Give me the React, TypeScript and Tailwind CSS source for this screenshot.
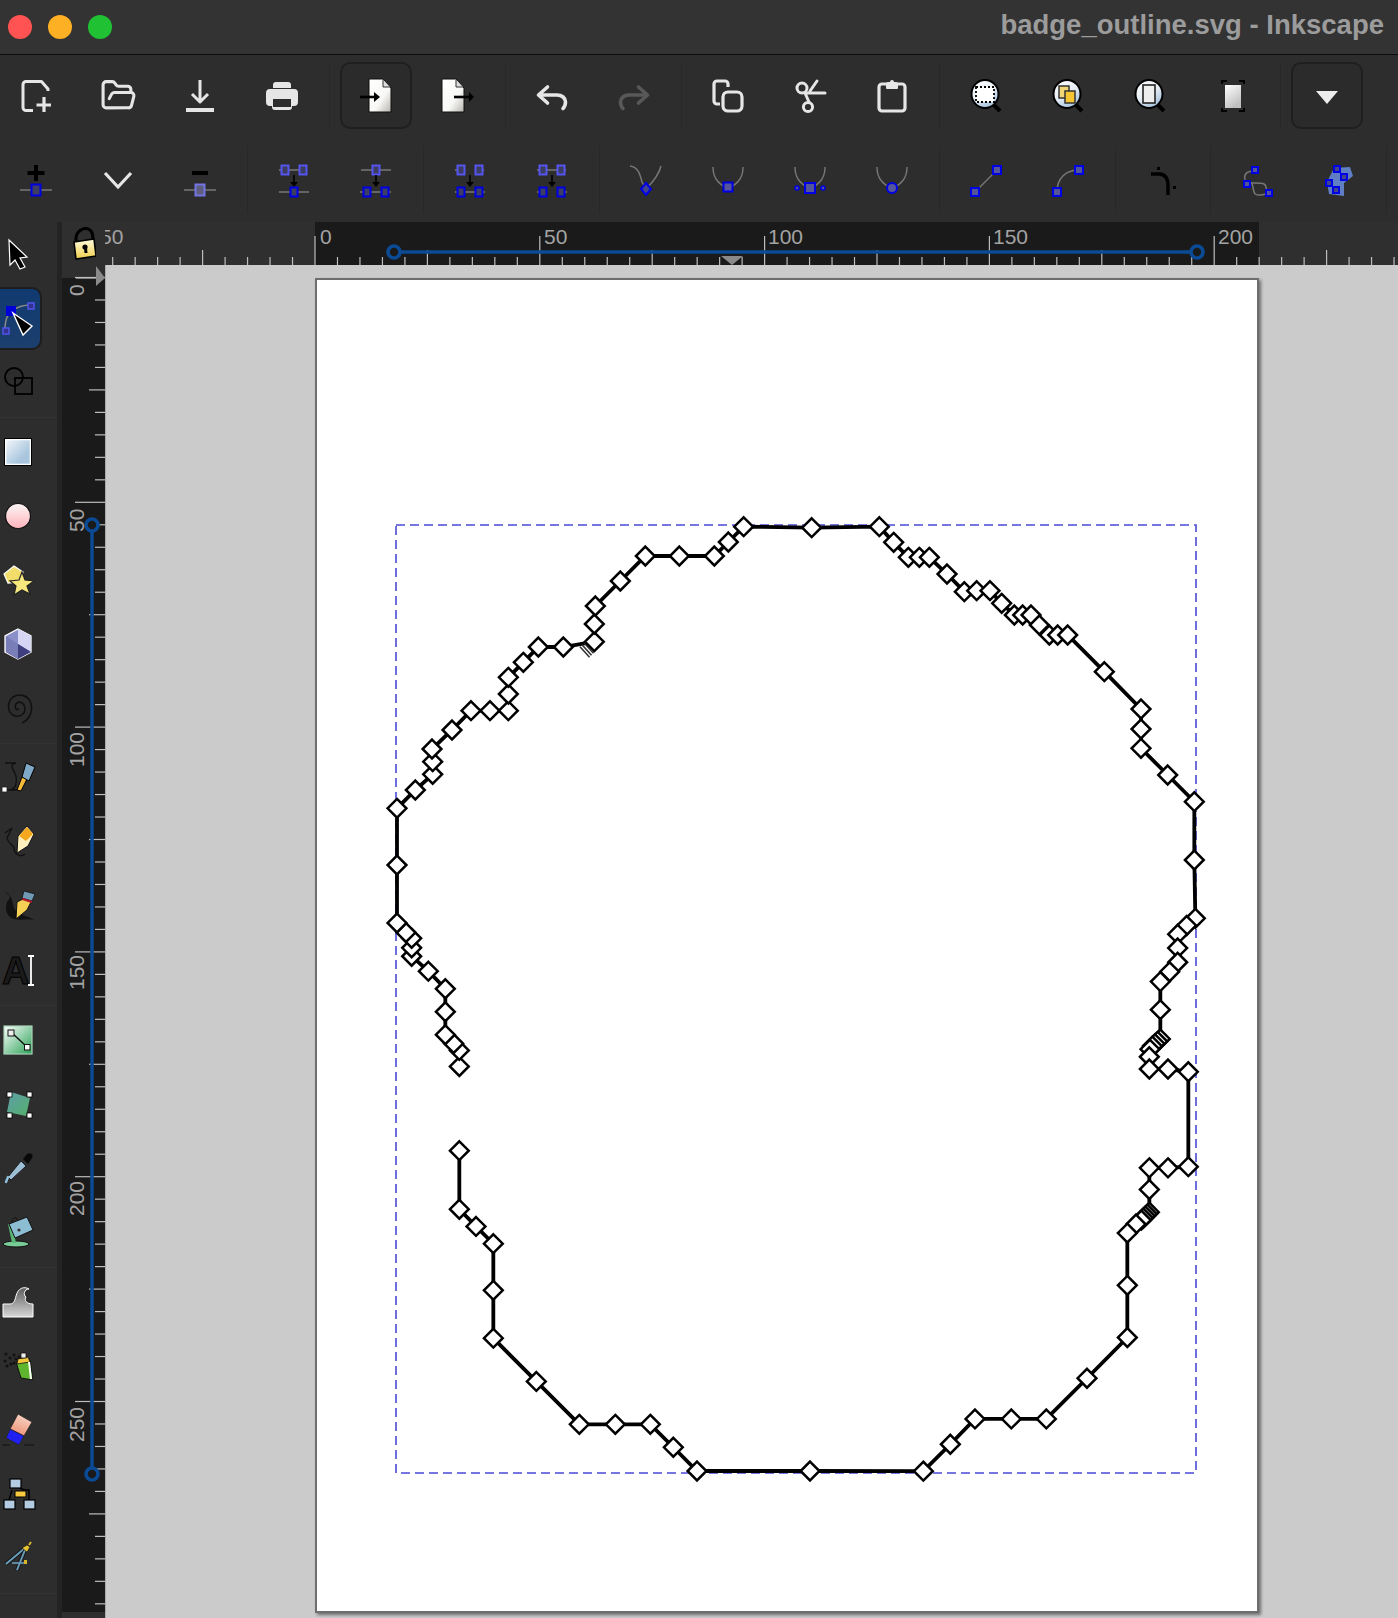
import React from "react";
import { FolderOpen } from "lucide-react";

const Svg = ({ children }: { children: React.ReactNode }) => (
  <svg width={32} height={32} viewBox="0 0 32 32" className="block overflow-visible shrink-0">
    {children}
  </svg>
);

const W = "#e6e6e6";
const B = "#0000e6";
const L = "#5555f0";
const G = "#777777";

const Sq = ({ x, y, w = 7, h = 9, c = B, f = "#3d3d62" }: { x: number; y: number; w?: number; h?: number; c?: string; f?: string }) => (
  <rect x={x - w / 2} y={y - h / 2} width={w} height={h} fill={f} stroke={c} strokeWidth={2} />
);

/* ---------- first toolbar ---------- */
const NewIcon = () => (
  <Svg>
    <path d="M28 11 V9 L21.5 1.5 H6 a3 3 0 0 0 -3 3 V27.5 a3 3 0 0 0 3 3 H13" fill="none" stroke={W} strokeWidth={3} strokeLinejoin="round" />
    <path d="M24 17 V32 M16.5 25 H31" fill="none" stroke={W} strokeWidth={3.2} />
  </Svg>
);
const SaveIcon = () => (
  <Svg>
    <path d="M16 0 V21 M8 14 L16 22 L24 14" fill="none" stroke={W} strokeWidth={3} strokeLinejoin="round" />
    <rect x="2" y="28" width="28" height="4" fill={W} />
  </Svg>
);
const PrintIcon = () => (
  <Svg>
    <path d="M7 5 a3 3 0 0 1 3 -3 H22 a3 3 0 0 1 3 3 V8 H7 Z" fill={W} />
    <path d="M4 9 H28 a4 4 0 0 1 4 4 V22 a4 4 0 0 1 -4 4 H26 V27 a3 3 0 0 1 -3 3 H9 a3 3 0 0 1 -3 -3 V26 H4 a4 4 0 0 1 -4 -4 V13 a4 4 0 0 1 4 -4 Z" fill={W} />
    <rect x="7" y="19" width="18" height="8" fill="#2d2d2d" />
  </Svg>
);
const DocGrad = ({ id }: { id: string }) => (
  <defs>
    <linearGradient id={id} x1="0" y1="0" x2="1" y2="1">
      <stop offset="0" stopColor="#ffffff" />
      <stop offset="0.6" stopColor="#f8f8f6" />
      <stop offset="1" stopColor="#b5b3ad" />
    </linearGradient>
  </defs>
);
const ImportIcon = () => (
  <Svg>
    <DocGrad id="imp" />
    <path d="M9 -1 H23 L31 8 V32 H9 Z" fill="url(#imp)" stroke="#111" strokeWidth={1} />
    <path d="M23 0 V7 H30" fill="#ddd" stroke="#333" strokeWidth={1} />
    <path d="M0 17 H16" stroke="#000" strokeWidth={2.6} />
    <path d="M14 12 L20 17 L14 22 Z" fill="#000" />
  </Svg>
);
const ExportIcon = () => (
  <Svg>
    <DocGrad id="exp" />
    <path d="M0 -1 H14 L22 8 V32 H0 Z" fill="url(#exp)" stroke="#111" strokeWidth={1} />
    <path d="M14 0 V7 H21" fill="#ddd" stroke="#333" strokeWidth={1} />
    <path d="M12 17 H28" stroke="#000" strokeWidth={2.6} />
    <path d="M27 12 L32 17 L27 22 Z" fill="#000" />
  </Svg>
);
const UndoIcon = ({ c = W, flip = false }: { c?: string; flip?: boolean }) => (
  <Svg>
    <g transform={flip ? "matrix(-1 0 0 1 32 0)" : undefined}>
      <path d="M11.5 7 L2.5 15 L11.5 23 M3 15 H21 C26 15 29.5 18 29.5 22 C29.5 25 28.5 27 27 28.5" fill="none" stroke={c} strokeWidth={3.6} strokeLinecap="round" strokeLinejoin="round" />
    </g>
  </Svg>
);
const CopyIcon = () => (
  <Svg>
    <path d="M8 24 H5 a3 3 0 0 1 -3 -3 V4 a3 3 0 0 1 3 -3 H13 a3 3 0 0 1 3 3 V7" fill="none" stroke={W} strokeWidth={3.2} />
    <rect x="11" y="12" width="19" height="19" rx="5" fill="none" stroke={W} strokeWidth={3.2} />
  </Svg>
);
const CutIcon = () => (
  <Svg>
    <circle cx="8" cy="8" r="5" fill="none" stroke={W} strokeWidth={3} />
    <circle cx="14" cy="27" r="4.6" fill="none" stroke={W} strokeWidth={3} />
    <path d="M11 13 L15 22 M13 13 H31 M16 11 L23 1" fill="none" stroke={W} strokeWidth={3} strokeLinecap="round" />
  </Svg>
);
const PasteIcon = () => (
  <Svg>
    <rect x="3" y="4" width="26" height="27" rx="3" fill="none" stroke={W} strokeWidth={3.2} />
    <path d="M10 4 a2 2 0 0 1 2 -2 h2 a2 2 0 0 1 4 0 h2 a2 2 0 0 1 2 2 V8 a1 1 0 0 1 -1 1 H11 a1 1 0 0 1 -1 -1 Z" fill={W} />
  </Svg>
);
const ZoomShell = ({ id, children }: { id: string; children: React.ReactNode }) => (
  <Svg>
    <defs>
      <linearGradient id={id} x1="0" y1="0" x2="0.6" y2="1">
        <stop offset="0" stopColor="#ffffff" />
        <stop offset="0.55" stopColor="#e8eef5" />
        <stop offset="1" stopColor="#a9c3dd" />
      </linearGradient>
    </defs>
    <path d="M24 25 L30 31" stroke="#000" strokeWidth={4} />
    <ellipse cx="15" cy="14" rx="13.5" ry="14" fill={`url(#${id})`} stroke="#000" strokeWidth={2} />
    {children}
  </Svg>
);
const ZoomSel = () => (
  <ZoomShell id="z1">
    <rect x="6" y="7" width="18" height="15" fill="#fff" stroke="#000" strokeWidth={1.8} strokeDasharray="2 2" />
  </ZoomShell>
);
const ZoomDraw = () => (
  <ZoomShell id="z2">
    <rect x="7" y="6" width="10" height="12" fill="#f2d675" stroke="#333" strokeWidth={1.5} />
    <rect x="13" y="11" width="10" height="12" fill="#f7c531" stroke="#333" strokeWidth={1.5} />
  </ZoomShell>
);
const ZoomPage = () => (
  <ZoomShell id="z3">
    <rect x="9" y="5" width="12" height="18" fill="#eee" stroke="#222" strokeWidth={1.6} />
  </ZoomShell>
);
const FitPage = () => (
  <Svg>
    <defs>
      <linearGradient id="fp" x1="0" y1="0" x2="0.5" y2="1">
        <stop offset="0" stopColor="#fff" />
        <stop offset="1" stopColor="#c0c0c0" />
      </linearGradient>
    </defs>
    <rect x="8" y="5" width="16" height="23" fill="url(#fp)" />
    <path d="M5 4 V1 H10 M22 1 H27 V4 M5 28 V31 H10 M22 31 H27 V28" fill="none" stroke="#000" strokeWidth={2} />
  </Svg>
);
const MenuArrow = () => (
  <Svg>
    <path d="M5 11 H27 L16 24 Z" fill="#eeeeee" />
  </Svg>
);

/* ---------- second toolbar ---------- */
const AddNode = () => (
  <Svg>
    <path d="M16 1 V17 M7.5 9 H24.5" stroke="#000" strokeWidth={4} />
    <path d="M0 26 H32" stroke={G} strokeWidth={1.5} />
    <Sq x={16} y={26} w={9} h={11} />
  </Svg>
);
const Chevron = () => (
  <Svg>
    <path d="M3 9 L16 23 L29 9" fill="none" stroke={W} strokeWidth={3.2} />
  </Svg>
);
const RemoveNode = () => (
  <Svg>
    <path d="M8 9 H24" stroke="#000" strokeWidth={4} />
    <path d="M0 26 H32" stroke={G} strokeWidth={1.5} />
    <Sq x={16} y={26} w={9} h={11} c="#7474e6" f="#5e5e7e" />
  </Svg>
);
const Arrow = () => (
  <>
    <path d="M16 11 V20" stroke="#000" strokeWidth={1.6} />
    <path d="M12 18 H20 L16 23 Z" fill="#000" />
  </>
);
const Join1 = () => (
  <Svg>
    <path d="M1 6 H29 M1 28 H31" stroke={G} strokeWidth={1.4} />
    <Sq x={7} y={6} c={L} /><Sq x={25} y={6} c={L} />
    <Arrow />
    <Sq x={16} y={28} />
  </Svg>
);
const Join2 = () => (
  <Svg>
    <path d="M1 6 H31 M0 28 H31" stroke={G} strokeWidth={1.4} />
    <Sq x={16} y={6} c={L} />
    <Arrow />
    <Sq x={7} y={28} /><Sq x={25} y={28} />
  </Svg>
);
const Join3 = () => (
  <Svg>
    <path d="M1 6 H9 M23 6 H30 M1 28 H31" stroke={G} strokeWidth={1.4} />
    <Sq x={7} y={6} c={L} /><Sq x={25} y={6} c={L} />
    <Arrow />
    <Sq x={7} y={28} /><Sq x={25} y={28} />
  </Svg>
);
const Join4 = () => (
  <Svg>
    <path d="M1 6 H30 M1 28 H9 M23 28 H31" stroke={G} strokeWidth={1.4} />
    <Sq x={7} y={6} c={L} /><Sq x={25} y={6} c={L} />
    <Arrow />
    <Sq x={7} y={28} /><Sq x={25} y={28} />
  </Svg>
);
const Curve = () => <path d="M1 3 C1 13 5 19 16 25 C27 19 31 13 31 3" fill="none" stroke={G} strokeWidth={1.4} />;
const NodeCusp = () => (
  <Svg>
    <path d="M0 2 C8 3 10 10 12 18 L16 25 C23 18 29 10 31 2" fill="none" stroke={G} strokeWidth={1.5} />
    <path d="M16 19 L21 25 L16 31 L11 25 Z" fill="#44448a" stroke={B} strokeWidth={2} />
  </Svg>
);
const NodeSmooth = () => (
  <Svg>
    <Curve />
    <Sq x={16} y={23} w={9} h={9} f="#55559a" />
  </Svg>
);
const NodeSym = () => (
  <Svg>
    <Curve />
    <Sq x={16} y={24} w={10} h={10} f="#55559a" />
    <circle cx="3" cy="24" r="2" fill="#55559a" stroke={B} strokeWidth={1.5} />
    <circle cx="29" cy="24" r="2" fill="#55559a" stroke={B} strokeWidth={1.5} />
  </Svg>
);
const NodeAuto = () => (
  <Svg>
    <Curve />
    <ellipse cx="16" cy="24" rx="5" ry="5" fill="#55559a" stroke={B} strokeWidth={2} />
  </Svg>
);
const SegLine = () => (
  <Svg>
    <path d="M5 28 L27 6" stroke={G} strokeWidth={1.5} />
    <Sq x={5} y={28} w={8} h={8} f="#55559a" /><Sq x={27} y={6} w={8} h={8} f="#55559a" />
  </Svg>
);
const SegCurve = () => (
  <Svg>
    <path d="M5 28 C5 14 14 6 27 6" fill="none" stroke={G} strokeWidth={1.5} />
    <Sq x={5} y={28} w={8} h={8} f="#55559a" /><Sq x={27} y={6} w={8} h={8} f="#55559a" />
  </Svg>
);
const Effect = () => (
  <Svg>
    <path d="M4 10 H12 C18 10 21 14 21 22 V31" fill="none" stroke="#000" strokeWidth={3.4} />
    <rect x="10" y="3" width="3" height="3" fill="#000" />
    <rect x="26" y="22" width="3" height="3" fill="#000" />
  </Svg>
);
const ClipEdit = () => (
  <Svg>
    <path d="M14 7 C5 7 3 12 6 18 C9 20 20 18 24 20 C28 22 25 29 28 29 M13 7 H17 M6 18 H10 C14 18 12 26 15 30 C18 32 24 31 28 29" fill="none" stroke={G} strokeWidth={1.5} />
    <Sq x={15} y={6} w={6} h={6} f="#55559a" />
    <Sq x={7} y={20} w={6} h={6} f="#55559a" />
    <Sq x={29} y={29} w={6} h={6} f="#55559a" />
  </Svg>
);
const LpeMask = () => (
  <Svg>
    <path d="M5 18 L12 4 L28 3 L31 12 L22 19 L22 32 L7 30 Z" fill="#5f7ec4" />
    <Sq x={15} y={5} w={6} h={6} f="#44448a" />
    <Sq x={7} y={19} w={6} h={6} f="#44448a" />
    <Sq x={22} y={13} w={6} h={6} f="#44448a" />
    <Sq x={14} y={26} w={6} h={6} f="#44448a" />
  </Svg>
);

/* ---------- tools ---------- */
const Select = () => (
  <Svg>
    <path d="M7 2 L25 19 L18 20 L23 29 L18 31 L13 22 L8 27 Z" fill="#000" stroke="#fff" strokeWidth={1.2} />
  </Svg>
);
const NodeTool = () => (
  <Svg>
    <path d="M3 28 C3 16 7 10 10 9 C16 4 24 3 29 3" fill="none" stroke="#888" strokeWidth={1.5} />
    <rect x="4" y="4" width="10" height="10" fill="#0000d8" />
    <rect x="26" y="1" width="6" height="6" fill="#33338f" stroke={L} strokeWidth={1.4} />
    <rect x="1" y="26" width="6" height="6" fill="#33338f" stroke={L} strokeWidth={1.4} />
    <path d="M11 11 L30 24 L21 33 Z" fill="#000" stroke="#fff" strokeWidth={1.4} />
  </Svg>
);
const Shapes = () => (
  <Svg>
    <circle cx="12" cy="11" r="9" fill="none" stroke="#000" strokeWidth={1.8} />
    <rect x="13" y="12" width="17" height="16" fill="none" stroke="#000" strokeWidth={1.8} />
  </Svg>
);
const RectTool = () => (
  <Svg>
    <defs>
      <linearGradient id="rc" x1="0" y1="0" x2="1" y2="1">
        <stop offset="0" stopColor="#f4f8fb" />
        <stop offset="0.7" stopColor="#a9c6de" />
      </linearGradient>
    </defs>
    <rect x="3.5" y="3.5" width="25" height="25" fill="url(#rc)" stroke="#fff" strokeWidth={1.6} />
    <rect x="2.5" y="2.5" width="27" height="27" fill="none" stroke="#000" strokeWidth={1} />
  </Svg>
);
const CircleTool = () => (
  <Svg>
    <defs>
      <linearGradient id="ci" x1="0" y1="0" x2="0" y2="1">
        <stop offset="0" stopColor="#fbf6f6" />
        <stop offset="1" stopColor="#ffb3bb" />
      </linearGradient>
    </defs>
    <circle cx="16" cy="16" r="12.5" fill="url(#ci)" stroke="#111" strokeWidth={1.2} />
  </Svg>
);
const StarTool = () => (
  <Svg>
    <path d="M2 10 L12 2 L21 8 L18 18 L6 19 Z" fill="#f2dd6a" stroke="#fff" strokeWidth={1.2} />
    <path d="M20 8 L23 16 L32 17 L25 22 L28 30 L20 26 L12 31 L14 22 L8 17 L17 16 Z" fill="#f7e87d" stroke="#222" strokeWidth={1.2} />
  </Svg>
);
const Box3d = () => (
  <Svg>
    <path d="M16 1 L29 8 V24 L16 31 L3 24 V8 Z" fill="#8b8fc8" stroke="#fff" strokeWidth={1.3} />
    <path d="M16 1 L29 8 V24 L16 16 Z" fill="#d6d6f4" />
    <path d="M16 16 L29 24 L16 31 L4 24 Z" fill="#3f3f80" />
    <path d="M4 8 L16 16 V31 L4 24 Z" fill="#7a7eb8" />
  </Svg>
);
const Spiral = () => (
  <Svg>
    <path d="M17 17 C14 19 12 15 14 12 C17 8 23 11 23 17 C23 23 16 26 11 23 C5 19 5 10 11 5 C17 1 27 3 29 12 C31 20 27 28 20 31" fill="none" stroke="#111" strokeWidth={1.6} />
  </Svg>
);
const PenTool = () => (
  <Svg>
    <path d="M3 28 H15 M3 1 H14 C6 3 12 8 14 14 C15 20 14 26 9 28" fill="none" stroke="#111" strokeWidth={1.4} />
    <rect x="0" y="25" width="5" height="5" fill="#fff" stroke="#222" strokeWidth={0.8} />
    <path d="M15 28 L20 15 L25 17 L19 29 Z" fill="#f2b93b" stroke="#000" strokeWidth={1} />
    <path d="M20 15 L24 1 L33 5 L27 19 Z" fill="#7ea8c6" stroke="#000" strokeWidth={1} />
  </Svg>
);
const PencilTool = () => (
  <Svg>
    <path d="M3 7 L10 2 L5 12 C6 18 11 18 12 22 C12 28 18 32 23 28" fill="none" stroke="#111" strokeWidth={1.4} />
    <path d="M15 27 L16 10 L25 0 L32 8 L26 20 Z" fill="#fff2c0" stroke="#111" strokeWidth={1} />
    <path d="M17 10 L25 1 L31 8 L24 15 Z" fill="#f5a81d" />
  </Svg>
);
const CalliTool = () => (
  <Svg>
    <path d="M2 2 C8 3 10 6 5 12 C2 20 6 28 12 29 C20 31 25 28 32 30 C27 26 16 26 12 18 C10 10 10 5 2 2 Z" fill="#111" />
    <path d="M14 29 L15 12 L21 9 L29 12 L25 20 Z" fill="#f6cf55" stroke="#111" strokeWidth={1} />
    <path d="M22 1 L33 4 L30 11 L20 8 Z" fill="#6f99b5" stroke="#111" strokeWidth={0.8} />
    <path d="M21 8 L30 11 L29.5 13 L20 10 Z" fill="#b5192c" />
  </Svg>
);
const TextTool = () => (
  <Svg>
    <text x="0" y="30" fontFamily="Liberation Sans, sans-serif" fontWeight={700} fontSize={38} fill="#1a1a1a" stroke="#000" strokeWidth={1}>A</text>
    <path d="M26 2 H32 M29 2 V31 M26 31 H32" fill="none" stroke="#fff" strokeWidth={1.8} />
  </Svg>
);
const GradTool = () => (
  <Svg>
    <defs>
      <linearGradient id="gr" x1="0" y1="0" x2="1" y2="1">
        <stop offset="0" stopColor="#ffffff" />
        <stop offset="1" stopColor="#28a054" />
      </linearGradient>
    </defs>
    <rect x="2" y="2" width="28" height="28" fill="url(#gr)" stroke="#a9d2b7" strokeWidth={1.2} />
    <path d="M9 8 L25 23" stroke="#111" strokeWidth={1.4} />
    <rect x="6" y="6" width="6" height="6" fill="#eee" stroke="#111" strokeWidth={1} />
    <rect x="22.5" y="20.5" width="5.5" height="5.5" fill="#fff" stroke="#111" strokeWidth={1} />
  </Svg>
);
const MeshTool = () => (
  <Svg>
    <defs>
      <linearGradient id="ms" x1="0" y1="0" x2="1" y2="1">
        <stop offset="0" stopColor="#5d9da9" />
        <stop offset="1" stopColor="#55b06b" />
      </linearGradient>
    </defs>
    <path d="M9 4 L28 10 L24 28 L5 24 Z" fill="url(#ms)" />
    {[[5, 4], [25, 4], [5, 25], [25, 25]].map(([x, y]) => (
      <rect key={`${x}-${y}`} x={x} y={y} width="5" height="5" fill="#fff" stroke="#000" strokeWidth={0.8} />
    ))}
  </Svg>
);
const Dropper = () => (
  <Svg>
    <path d="M19 9 L24 14 L9 28 L6 25 Z" fill="#9dbfd6" stroke="#1d1d1d" strokeWidth={1} />
    <path d="M6 25 L4 30" stroke="#8fc0dd" strokeWidth={2.4} strokeLinecap="round" />
    <path d="M21 7 L25 2 C28 0 32 3 30 6 L26 12 Z" fill="#080808" />
  </Svg>
);
const Bucket = () => (
  <Svg>
    <ellipse cx="14" cy="28" rx="13" ry="3" fill="#79cc97" stroke="#111" strokeWidth={1} />
    <path d="M6 8 L10 27 L14 27 L10 8 Z" fill="#5bb678" />
    <path d="M7 8 L25 1 L31 14 L13 22 Z" fill="#8cbdd3" stroke="#111" strokeWidth={1} />
    <circle cx="17" cy="14" r="1.6" fill="#333" />
    <path d="M10 7 C10 1 15 0 15 4" fill="none" stroke="#111" strokeWidth={1} />
  </Svg>
);
const Tweak = () => (
  <Svg>
    <defs>
      <linearGradient id="tw" x1="0" y1="0" x2="0" y2="1">
        <stop offset="0" stopColor="#5c5c5c" />
        <stop offset="1" stopColor="#d8d8d8" />
      </linearGradient>
    </defs>
    <path d="M1 31 V18 H8 C12 18 13 14 14 10 C16 2 22 0 27 3 C22 3 21 9 24 11 C22 14 24 18 31 18 V31 Z" fill="url(#tw)" stroke="#fff" strokeWidth={1} />
  </Svg>
);
const Spray = () => (
  <Svg>
    <path d="M14 12 L28 10 L31 30 L19 28 Z" fill="#5fb52e" stroke="#111" strokeWidth={1} />
    <path d="M16 9 L26 7 L28 12 L15 14 Z" fill="#f0c63d" stroke="#111" strokeWidth={0.8} />
    <path d="M27 12 L29 29" stroke="#fff" strokeWidth={2} />
    <rect x="19" y="3" width="5" height="5" fill="#eee" stroke="#111" strokeWidth={0.8} />
    {[[4, 4], [3, 11], [8, 8], [9, 14], [12, 5], [14, 9], [17, 7], [5, 16], [12, 13]].map(([x, y]) => (
      <circle key={`${x}-${y}`} cx={x} cy={y} r="1.5" fill="#111" />
    ))}
  </Svg>
);
const Eraser = () => (
  <Svg>
    <defs>
      <linearGradient id="er" x1="0.7" y1="0" x2="0.3" y2="1">
        <stop offset="0" stopColor="#f8d6c8" />
        <stop offset="1" stopColor="#ee8f72" />
      </linearGradient>
    </defs>
    <path d="M0 31 H8 M22 31 H32" stroke="#111" strokeWidth={1.2} />
    <path d="M16 0 L30 8 L22 22 L8 15 Z" fill="url(#er)" stroke="#222" strokeWidth={0.8} />
    <path d="M8 15 L22 22 L17 31 L4 24 Z" fill="#2020f0" stroke="#222" strokeWidth={0.8} />
  </Svg>
);
const Connector = () => (
  <Svg>
    <path d="M14 8 L22 12 L27 12 V22 M10 12 L7 22" fill="none" stroke="#000" strokeWidth={1.5} />
    <rect x="8" y="1" width="11" height="9" fill="#b3cce2" stroke="#000" strokeWidth={1.2} />
    <rect x="13" y="13" width="11" height="6" fill="#f6c93e" stroke="#000" strokeWidth={1} />
    <rect x="2" y="22" width="11" height="9" fill="#b3cce2" stroke="#000" strokeWidth={1.2} />
    <rect x="22" y="22" width="11" height="9" fill="#b3cce2" stroke="#000" strokeWidth={1.2} />
  </Svg>
);
const Measure = () => (
  <Svg>
    <path d="M23 6 L4 22" stroke="#111" strokeWidth={3.6} />
    <path d="M23 6 L4 22" stroke="#6a9dbb" strokeWidth={2} />
    <path d="M23 8 L15 28" stroke="#111" strokeWidth={3.6} />
    <path d="M23 8 L15 28" stroke="#6a9dbb" strokeWidth={2} />
    <path d="M10 21 L24 21" stroke="#6a9dbb" strokeWidth={1.6} />
    <path d="M20 6 L25 3 L28 5 L25 10 Z" fill="#e6c22f" stroke="#111" strokeWidth={0.6} />
    <path d="M27 3 L29 0" stroke="#d9b52a" strokeWidth={2} />
    <rect x="22" y="18" width="3" height="4" fill="#d9b52a" />
  </Svg>
);
const PagesTool = () => (
  <Svg>
    <path d="M10 14 L17 9 L26 14 L26 30 L10 30 Z" fill="#fff" stroke="#ffb9b9" strokeWidth={1.2} />
  </Svg>
);

/* ---------- shell ---------- */
const TB = ({ children, active = false }: { children: React.ReactNode; active?: boolean }) => (
  <div
    className={
      active
        ? "w-[72px] h-[67px] shrink-0 flex items-center justify-center rounded-[10px] border-2 border-[#1f1f1f] bg-[#2b2b2b]"
        : "w-[72px] h-[67px] shrink-0 flex items-center justify-center"
    }
  >
    {children}
  </div>
);
const Sep = ({ l = 11, r = 10 }: { l?: number; r?: number }) => (
  <div className="w-px h-[67px] shrink-0 bg-[#282828]" style={{ marginLeft: l, marginRight: r }} />
);

const Tool = ({ children, active = false }: { children: React.ReactNode; active?: boolean }) => (
  <div className="h-[64px] shrink-0 flex items-center">
    <div
      className={
        active
          ? "w-[42px] h-[63px] pl-[2px] flex items-center rounded-r-[10px] border-2 border-l-0 border-[#1d1d1d] bg-gradient-to-b from-[#0f3a70] to-[#1c3f6e]"
          : "w-[42px] h-[63px] pl-[2px] flex items-center"
      }
    >
      {children}
    </div>
  </div>
);
const ToolSep = () => <div className="h-[6px] shrink-0 flex items-center"><div className="h-px w-full bg-[#333333]" /></div>;

/* ---------- rulers ---------- */
const STEP = 22.48;
const hTicks: { x: number; h: number }[] = [];
for (let i = -9; i <= 48; i++) {
  const m = ((i % 10) + 10) % 10;
  hTicks.push({ x: 315 + i * STEP - 105, h: m === 0 ? 29 : m === 5 ? 15 : 8 });
}
const vTicks: { y: number; w: number }[] = [];
for (let i = 0; i <= 60; i++) {
  const m = i % 10;
  vTicks.push({ y: i * STEP + 13 - 0.5, w: m === 0 ? 30 : m === 5 ? 16 : 10 });
}
const hLabels = [
  { t: "50", x: -5 },
  { t: "0", x: 320 - 105 },
  { t: "50 ", x: 544 - 105 },
  { t: "100", x: 768 - 105 },
  { t: "150", x: 993 - 105 },
  { t: "200", x: 1218 - 105 },
];
const vLabels = [
  { t: "0", y: 296 },
  { t: "50", y: 532 },
  { t: "100", y: 767 },
  { t: "150", y: 990 },
  { t: "200", y: 1216 },
  { t: "250", y: 1442 },
];

const GUIDE = "#0b4a94";

const HRuler = () => (
  <div className="relative flex-1 h-[43px] overflow-hidden bg-[#2f2f2f]">
    <div className="absolute top-0 bottom-0 left-[210px] w-[944px] bg-[#1a1a1a]" />
    <svg className="absolute inset-0" width={1293} height={43}>
      {hTicks.map((t) => (
        <line key={t.x} x1={t.x} x2={t.x} y1={43} y2={43 - t.h} stroke="#bdbdbd" strokeWidth={1.2} />
      ))}
      <path d="M616 34 H638 L627 43 Z" fill="#8a8a8a" />
      <line x1={289} x2={1092} y1={30} y2={30} stroke={GUIDE} strokeWidth={3.5} />
      <circle cx={289} cy={30} r={6} fill="#1a1a1a" stroke={GUIDE} strokeWidth={3.6} />
      <circle cx={1092} cy={30} r={6} fill="#1a1a1a" stroke={GUIDE} strokeWidth={3.6} />
    </svg>
    {hLabels.map((l) => (
      <span
        key={l.x}
        className="absolute top-[3px] text-[21px] leading-[24px] text-[#a3a3a3] font-['Liberation_Sans',sans-serif]"
        style={{ left: l.x }}
      >
        {l.t}
      </span>
    ))}
  </div>
);

const VRuler = () => (
  <div className="relative w-[43px] shrink-0 self-stretch overflow-hidden bg-[#2f2f2f]">
    <div className="absolute left-0 right-0 top-[13px] h-[1334px] bg-[#1a1a1a]" />
    <svg className="absolute inset-0" width={43} height={1353}>
      {vTicks.map((t) => (
        <line key={t.y} x1={43} x2={43 - t.w} y1={t.y} y2={t.y} stroke="#bdbdbd" strokeWidth={1.2} />
      ))}
      <line x1={14} x2={35} y1={13} y2={13} stroke="#bdbdbd" strokeWidth={1.2} />
      <path d="M34 1 L43 13 L34 21 Z" fill="#8a8a8a" />
      <line x1={30} x2={30} y1={260} y2={1209} stroke={GUIDE} strokeWidth={3.5} />
      <circle cx={30} cy={260} r={6} fill="#1a1a1a" stroke={GUIDE} strokeWidth={3.6} />
      <circle cx={30} cy={1209} r={6} fill="#1a1a1a" stroke={GUIDE} strokeWidth={3.6} />
    </svg>
    {vLabels.map((l) => (
      <span
        key={l.t}
        className="absolute left-[3px] text-[21px] leading-[24px] text-[#a3a3a3] font-['Liberation_Sans',sans-serif] origin-top-left -rotate-90 whitespace-nowrap"
        style={{ top: l.y - 265 }}
      >
        {l.t}
      </span>
    ))}
  </div>
);

/* ---------- the path ---------- */
type P = [number, number];
const z6 = (p: P): P => [p[0] / 3 + 380, p[1] / 3 + 500];
const z7 = (p: P): P => [p[0] / 3 + 830, p[1] / 3 + 500];
const z8 = (p: P): P => [p[0] / 3 + 380, p[1] / 2.613 + 900];
const z9 = (p: P): P => [p[0] / 3 + 900, p[1] / 2.529 + 880];

const nodes: P[] = [
  ...([[235, 435], [235, 393], [218, 375], [193, 352], [193, 292], [193, 232], [142, 186], [92, 147], [92, 125], [92, 100], [75, 85], [48, 60]] as P[]).map(z8),
  ...([[48, 1095], [48, 925], [103, 870], [155, 823], [155, 785], [153, 747], [213, 690], [270, 632], [327, 632], [382, 632], [382, 582], [382, 532], [427, 487], [472, 441], [547, 441], [640, 425], [640, 372], [643, 318], [718, 243], [793, 168], [895, 168], [1000, 168], [1042, 126], [1088, 80], [1292, 83]] as P[]).map(z6),
  ...([[145, 80], [188, 127], [232, 172], [265, 172], [295, 172], [348, 222], [400, 275], [437, 272], [477, 272], [512, 310], [550, 345], [575, 345], [600, 345], [625, 375], [655, 405], [680, 405], [710, 405], [820, 515], [930, 627], [930, 687], [930, 745], [1010, 825], [1090, 905], [1090, 1080]] as P[]).map(z7),
  ...([[883, 97], [857, 115], [830, 137], [830, 172], [830, 208], [806, 232], [778, 257], [778, 328], [778, 402], [770, 408], [762, 414], [754, 420], [747, 428], [745, 447], [745, 478], [801, 478], [862, 485], [862, 725], [801, 728], [745, 728], [745, 783], [745, 840], [739, 845], [733, 850], [727, 855], [721, 860], [705, 870], [679, 893], [679, 1025], [679, 1157], [558, 1260], [436, 1363], [331, 1363], [222, 1363], [148, 1427], [67, 1495]] as P[]).map(z9),
  [809, 1471],
  [696, 1471],
  ...([[877, 1430], [808, 1370], [703, 1370], [595, 1370], [466, 1258], [337, 1145], [337, 1020], [337, 898], [285, 853], [235, 808], [235, 655]] as P[]).map(z8),
];

const Drawing = () => (
  <svg className="absolute inset-0" width="100%" height="100%" viewBox="316 280 940 1331">
    <rect x={395} y={525} width={800} height={948} fill="none" stroke="#4a4ad8" strokeWidth={1.6} strokeDasharray="9 5" />
    <polyline points={nodes.map((p) => p.join(",")).join(" ")} fill="none" stroke="#000" strokeWidth={3.8} />
    {[0, 1, 2].map((i) => {
      const [x, y] = z6([597 + i * 6, 440 - i * 6]);
      return <line key={i} x1={x} y1={y} x2={x + 9.5} y2={y + 10.5} stroke="#333" strokeWidth={1.6} />;
    })}
    {nodes.map(([x, y], i) => (
      <path
        key={i}
        d={`M${x} ${y - 9.4} L${x + 9.4} ${y} L${x} ${y + 9.4} L${x - 9.4} ${y} Z`}
        fill="#fff"
        stroke="#000"
        strokeWidth={2.5}
      />
    ))}
  </svg>
);

const Gap = ({ w = 10 }: { w?: number }) => <div className="shrink-0" style={{ width: w }} />;

export default function App() {
  return (
    <div className="w-[1398px] h-[1618px] overflow-hidden flex flex-col bg-[#2d2d2d] font-['Liberation_Sans',sans-serif]">
      {/* title bar */}
      <div className="h-[54px] shrink-0 flex items-center justify-between pl-[8px] pr-[14px] bg-[#333333]">
        <div className="flex gap-[16px]">
          <div className="w-[24px] h-[24px] rounded-full bg-[#fe5352]" />
          <div className="w-[24px] h-[24px] rounded-full bg-[#feb024]" />
          <div className="w-[24px] h-[24px] rounded-full bg-[#20c233]" />
        </div>
        <div className="text-[27.5px] font-bold text-[#9c9c9c] leading-none pb-[5px]">badge_outline.svg - Inkscape</div>
      </div>
      <div className="h-[1px] shrink-0 bg-[#0d0d0d]" />

      {/* commands bar */}
      <div className="h-[84px] shrink-0 flex items-center pb-[3px]">
        <TB><NewIcon /></TB><Gap />
        <TB><FolderOpen size={37} strokeWidth={2} color={W} /></TB><Gap />
        <TB><SaveIcon /></TB><Gap />
        <TB><PrintIcon /></TB>
        <Sep />
        <TB active><ImportIcon /></TB><Gap />
        <TB><ExportIcon /></TB>
        <Sep />
        <TB><UndoIcon /></TB><Gap />
        <TB><UndoIcon c="#585858" flip /></TB>
        <Sep />
        <TB><CopyIcon /></TB><Gap />
        <TB><CutIcon /></TB><Gap />
        <TB><PasteIcon /></TB>
        <Sep />
        <TB><ZoomSel /></TB><Gap />
        <TB><ZoomDraw /></TB><Gap />
        <TB><ZoomPage /></TB><Gap w={11} />
        <TB><FitPage /></TB>
        <Sep />
        <TB active><MenuArrow /></TB>
      </div>

      {/* tool controls bar */}
      <div className="h-[83px] shrink-0 flex items-center pb-[2px]">
        <TB><AddNode /></TB><Gap />
        <TB><Chevron /></TB><Gap />
        <TB><RemoveNode /></TB>
        <Sep />
        <TB><Join1 /></TB><Gap />
        <TB><Join2 /></TB>
        <Sep />
        <TB><Join3 /></TB><Gap />
        <TB><Join4 /></TB>
        <Sep />
        <TB><NodeCusp /></TB><Gap />
        <TB><NodeSmooth /></TB><Gap />
        <TB><NodeSym /></TB><Gap />
        <TB><NodeAuto /></TB>
        <Sep l={11} r={10} />
        <TB><SegLine /></TB><Gap />
        <TB><SegCurve /></TB>
        <Sep l={11} r={11} />
        <TB><Effect /></TB>
        <Sep l={11} r={9} />
        <TB><ClipEdit /></TB><Gap />
        <TB><LpeMask /></TB>
        <Sep l={12} r={0} />
      </div>

      {/* workspace */}
      <div className="flex-1 min-h-0 flex">
        <div className="w-[57px] shrink-0 flex flex-col overflow-hidden">
          <Tool><Select /></Tool>
          <Tool active><NodeTool /></Tool>
          <Tool><Shapes /></Tool>
          <ToolSep />
          <Tool><RectTool /></Tool>
          <Tool><CircleTool /></Tool>
          <Tool><StarTool /></Tool>
          <Tool><Box3d /></Tool>
          <Tool><Spiral /></Tool>
          <ToolSep />
          <Tool><PenTool /></Tool>
          <Tool><PencilTool /></Tool>
          <Tool><CalliTool /></Tool>
          <Tool><TextTool /></Tool>
          <ToolSep />
          <Tool><GradTool /></Tool>
          <Tool><MeshTool /></Tool>
          <Tool><Dropper /></Tool>
          <Tool><Bucket /></Tool>
          <ToolSep />
          <Tool><Tweak /></Tool>
          <Tool><Spray /></Tool>
          <Tool><Eraser /></Tool>
          <Tool><Connector /></Tool>
          <Tool><Measure /></Tool>
          <ToolSep />
          <Tool><PagesTool /></Tool>
        </div>
        <div className="w-[5px] shrink-0 bg-[#232323]" />
        <div className="flex-1 min-w-0 flex flex-col">
          <div className="h-[43px] shrink-0 flex">
            <div className="w-[43px] shrink-0 flex items-center justify-center bg-[#2f2f2f]">
              <svg width={24} height={34} viewBox="0 0 24 34" className="block">
                <path d="M4 14 C3 4 12 -1 18 3 C21 5 21 9 21 15" fill="none" stroke="#000" strokeWidth={3} />
                <defs>
                  <linearGradient id="lk" x1="0" y1="0" x2="0" y2="1">
                    <stop offset="0" stopColor="#fffce0" />
                    <stop offset="1" stopColor="#f0cf4a" />
                  </linearGradient>
                </defs>
                <path d="M2 15 L22 12 L24 29 L4 32 Z" fill="url(#lk)" stroke="#000" strokeWidth={1.6} />
                <circle cx="13" cy="20" r="2.6" fill="#000" />
                <path d="M12 21 L15 21 L15.5 26 L12.5 26 Z" fill="#000" />
              </svg>
            </div>
            <HRuler />
          </div>
          <div className="flex-1 min-h-0 flex">
            <VRuler />
            <div className="flex-1 min-w-0 overflow-hidden bg-[#cbcbcb] border-l border-[#aaaaaa] pl-[209px] pt-[13px]">
              <div className="relative w-[944px] h-[1335px] bg-white border-2 border-[#6e6e6e] shadow-[2px_2px_3px_rgba(0,0,0,0.45)]">
                <Drawing />
              </div>
            </div>
          </div>
        </div>
      </div>
    </div>
  );
}
